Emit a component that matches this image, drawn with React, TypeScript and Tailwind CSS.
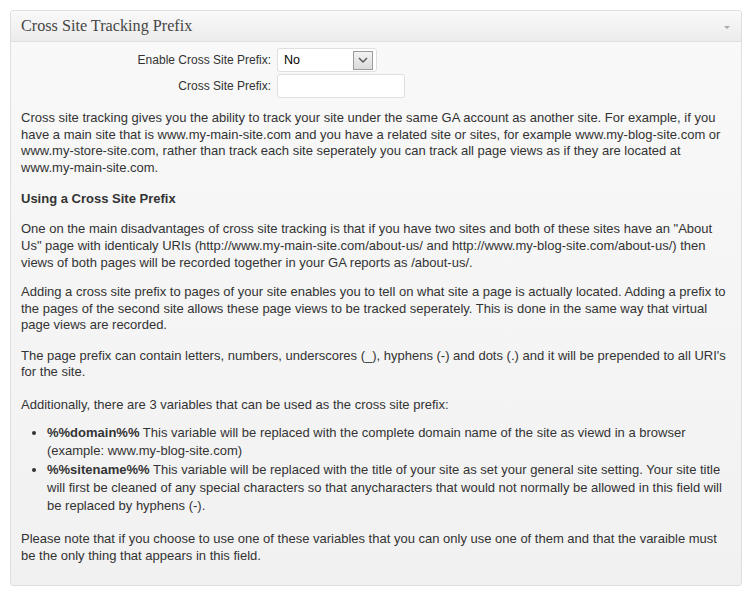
import React from "react";

export default function App() {
  return (
    <div
      className="min-h-[594px] bg-white pt-[10px] pl-[10px]"
      style={{ fontFamily: '"Liberation Sans", Arial, sans-serif' }}
    >
      <div className="w-[732px] rounded-[3px] border border-[#dfdfdf] bg-gradient-to-b from-[#f9f9f9] to-[#f1f1f1] shadow-[inset_0_1px_0_#fff]">
        <div className="relative flex h-[31px] items-center rounded-t-[3px] border-b border-[#dfdfdf] bg-gradient-to-b from-[#f9f9f9] to-[#ececec] pl-[10px]">
          <h3
            className="text-[16.2px] text-[#464646]"
            style={{ fontFamily: '"Liberation Serif", Georgia, serif' }}
          >
            Cross Site Tracking Prefix
          </h3>
          <span className="absolute right-[11px] top-[15px] h-0 w-0 border-x-[3px] border-t-[3px] border-x-transparent border-t-[#aaa]" />
        </div>
        <div className="px-[10px] pb-[20px] text-[13px] leading-[16.6px] text-[#333]">
          <div className="pt-[6px] text-[12px]">
            <div className="flex items-center">
              <label className="w-[256px] pr-[6px] text-right">Enable Cross Site Prefix:</label>
              <div className="flex h-[24px] w-[100px] items-center justify-between rounded-[3px] border border-[#dfdfdf] bg-white pl-[6px] pr-[3px] text-[12.5px] text-black">
                <span>No</span>
                <span className="flex h-[19px] w-[20px] items-center justify-center border border-[#9a9a9a] bg-gradient-to-b from-[#f2f2f2] to-[#dcdcdc]">
                  <svg width="10" height="6" viewBox="0 0 10 6">
                    <path d="M1 1 L5 5 L9 1" fill="none" stroke="#555" strokeWidth="1.4" />
                  </svg>
                </span>
              </div>
            </div>
            <div className="mt-[2px] flex items-center">
              <label className="w-[256px] pr-[6px] text-right">Cross Site Prefix:</label>
              <div className="h-[24px] w-[128px] rounded-[3px] border border-[#dfdfdf] bg-white" />
            </div>
          </div>
          <p className="mt-[12px]">
            Cross site tracking gives you the ability to track your site under the same GA account as another site. For example, if you have a main site that is www.my-main-site.com and you have a related site or sites, for example www.my-blog-site.com or www.my-store-site.com, rather than track each site seperately you can track all page views as if they are located at www.my-main-site.com.
          </p>
          <h4 className="mt-[15px] text-[13px] font-bold">Using a Cross Site Prefix</h4>
          <p className="mt-[13.5px]">
            One on the main disadvantages of cross site tracking is that if you have two sites and both of these sites have an "About Us" page with identicaly URIs (http://www.my-main-site.com/about-us/ and http://www.my-blog-site.com/about-us/) then views of both pages will be recorded together in your GA reports as /about-us/.
          </p>
          <p className="mt-[13px]">
            Adding a cross site prefix to pages of your site enables you to tell on what site a page is actually located. Adding a prefix to the pages of the second site allows these page views to be tracked seperately. This is done in the same way that virtual page views are recorded.
          </p>
          <p className="mt-[13.5px]">
            The page prefix can contain letters, numbers, underscores (_), hyphens (-) and dots (.) and it will be prepended to all URI's for the site.
          </p>
          <p className="mt-[16px]">
            Additionally, there are 3 variables that can be used as the cross site prefix:
          </p>
          <ul className="mt-[11px] list-disc pl-[26px] leading-[18px]">
            <li>
              <strong>%%domain%%</strong> This variable will be replaced with the complete domain name of the site as viewd in a browser (example: www.my-blog-site.com)
            </li>
            <li className="mt-[1px]">
              <strong>%%sitename%%</strong> This variable will be replaced with the title of your site as set your general site setting. Your site title will first be cleaned of any special characters so that anycharacters that would not normally be allowed in this field will be replaced by hyphens (-).
            </li>
          </ul>
          <p className="mt-[16px]">
            Please note that if you choose to use one of these variables that you can only use one of them and that the varaible must be the only thing that appears in this field.
          </p>
        </div>
      </div>
    </div>
  );
}
